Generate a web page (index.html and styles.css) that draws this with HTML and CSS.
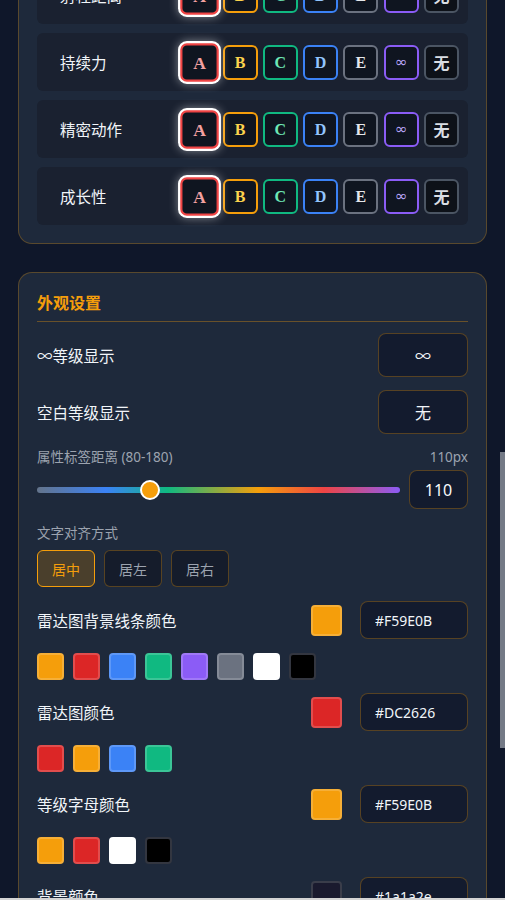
FILE: index.html
```html
<!DOCTYPE html>
<html lang="zh-CN">
<head>
<meta charset="utf-8">
<title>外观设置</title>
<link rel="stylesheet" href="styles.css">
</head>
<body>
<main class="page">
  <section class="panel panel-grades">
    <div class="grade-row">
      <span class="grade-label">射程距离</span>
      <div class="grade-group">
        <button class="grade g-a selected">A</button>
        <button class="grade g-b">B</button>
        <button class="grade g-c">C</button>
        <button class="grade g-d">D</button>
        <button class="grade g-e">E</button>
        <button class="grade g-inf">∞</button>
        <button class="grade g-none">无</button>
      </div>
    </div>
    <div class="grade-row">
      <span class="grade-label">持续力</span>
      <div class="grade-group">
        <button class="grade g-a selected">A</button>
        <button class="grade g-b">B</button>
        <button class="grade g-c">C</button>
        <button class="grade g-d">D</button>
        <button class="grade g-e">E</button>
        <button class="grade g-inf">∞</button>
        <button class="grade g-none">无</button>
      </div>
    </div>
    <div class="grade-row">
      <span class="grade-label">精密动作</span>
      <div class="grade-group">
        <button class="grade g-a selected">A</button>
        <button class="grade g-b">B</button>
        <button class="grade g-c">C</button>
        <button class="grade g-d">D</button>
        <button class="grade g-e">E</button>
        <button class="grade g-inf">∞</button>
        <button class="grade g-none">无</button>
      </div>
    </div>
    <div class="grade-row">
      <span class="grade-label">成长性</span>
      <div class="grade-group">
        <button class="grade g-a selected">A</button>
        <button class="grade g-b">B</button>
        <button class="grade g-c">C</button>
        <button class="grade g-d">D</button>
        <button class="grade g-e">E</button>
        <button class="grade g-inf">∞</button>
        <button class="grade g-none">无</button>
      </div>
    </div>
  </section>

  <section class="panel panel-look">
    <h2 class="panel-title">外观设置</h2>

    <div class="setting-row first">
      <span class="setting-label">∞等级显示</span>
      <div class="value-box">∞</div>
    </div>
    <div class="setting-row">
      <span class="setting-label">空白等级显示</span>
      <div class="value-box">无</div>
    </div>

    <div class="slider-block">
      <div class="slider-head">
        <span class="small-label">属性标签距离 (80-180)</span>
        <span class="small-label">110px</span>
      </div>
      <div class="slider-row">
        <input class="range" type="range" min="80" max="180" value="110">
        <input class="num-box" type="text" value="110">
      </div>
    </div>

    <div class="align-block">
      <div class="small-label">文字对齐方式</div>
      <div class="align-group">
        <button class="align-btn active">居中</button>
        <button class="align-btn">居左</button>
        <button class="align-btn">居右</button>
      </div>
    </div>

    <div class="color-block first-color">
      <div class="color-row">
        <span class="setting-label">雷达图背景线条颜色</span>
        <div class="color-pick">
          <span class="swatch c-amber"></span>
          <input class="hex-box" type="text" value="#F59E0B">
        </div>
      </div>
      <div class="presets">
        <span class="preset c-amber"></span>
        <span class="preset c-red"></span>
        <span class="preset c-blue"></span>
        <span class="preset c-green"></span>
        <span class="preset c-purple"></span>
        <span class="preset c-gray"></span>
        <span class="preset c-white"></span>
        <span class="preset c-black"></span>
      </div>
    </div>

    <div class="color-block">
      <div class="color-row">
        <span class="setting-label">雷达图颜色</span>
        <div class="color-pick">
          <span class="swatch c-red"></span>
          <input class="hex-box" type="text" value="#DC2626">
        </div>
      </div>
      <div class="presets">
        <span class="preset c-red"></span>
        <span class="preset c-amber"></span>
        <span class="preset c-blue"></span>
        <span class="preset c-green"></span>
      </div>
    </div>

    <div class="color-block">
      <div class="color-row">
        <span class="setting-label">等级字母颜色</span>
        <div class="color-pick">
          <span class="swatch c-amber"></span>
          <input class="hex-box" type="text" value="#F59E0B">
        </div>
      </div>
      <div class="presets">
        <span class="preset c-amber"></span>
        <span class="preset c-red"></span>
        <span class="preset c-white"></span>
        <span class="preset c-black"></span>
      </div>
    </div>

    <div class="color-block">
      <div class="color-row">
        <span class="setting-label">背景颜色</span>
        <div class="color-pick">
          <span class="swatch c-navy"></span>
          <input class="hex-box" type="text" value="#1a1a2e">
        </div>
      </div>
      <div class="presets">
        <span class="preset c-navy"></span>
        <span class="preset c-black"></span>
        <span class="preset c-white"></span>
      </div>
    </div>
  </section>
</main>
<div class="scroll-thumb"></div>
<div class="bottom-edge"></div>
</body>
</html>
```

FILE: styles.css
```css
html, body {
  margin: 0;
  padding: 0;
  height: 900px;
  overflow: hidden;
}

body {
  background: #0f172a;
  font-family: "Noto Sans", "Noto Sans CJK SC", sans-serif;
  color: #e5e7eb;
}

.page {
  padding: 0 18px;
}

.panel {
  background: #1e293b;
  border: 1px solid rgba(245, 158, 11, 0.28);
  border-radius: 14px;
  padding: 18px;
}

.panel-grades {
  margin-top: -53px;
  display: flex;
  flex-direction: column;
  gap: 9px;
}

.grade-row {
  height: 58px;
  display: flex;
  align-items: center;
  background: #1a2130;
  border-radius: 6px;
  padding: 0 9px 0 23px;
  box-sizing: border-box;
}

.grade-label {
  flex: 1;
  font-size: 15.5px;
  color: #f1f5f9;
}

.grade-group {
  display: flex;
  gap: 5.3px;
}

.grade {
  width: 35px;
  height: 35px;
  box-sizing: border-box;
  border: 2px solid #6b7280;
  border-radius: 6px;
  background: #0f1520;
  padding: 0;
  font-family: "Liberation Serif", "Noto Sans CJK SC", serif;
  font-weight: bold;
  font-size: 16px;
  line-height: 31px;
  text-align: center;
  color: #e5e7eb;
}

.g-a { border-color: #ef4444; color: #f3a1a1; }
.g-b { border-color: #f59e0b; color: #fcd34d; }
.g-c { border-color: #10b981; color: #6ee7b7; }
.g-d { border-color: #3b82f6; color: #93c5fd; }
.g-e { border-color: #6b7280; color: #e5e7eb; }
.g-inf { border-color: #8b5cf6; color: #b9a6f7; font-family: "DejaVu Sans", sans-serif; font-weight: normal; font-size: 15px; }
.g-none { border-color: #4b5563; color: #d9dde3; font-family: "Noto Sans CJK SC", sans-serif; font-size: 16px; background: #0d1118; }

.grade.selected {
  transform: scale(1.1);
  box-shadow: 0 0 0 2px #ffffff, 0 0 9px 2px rgba(255, 255, 255, 0.45);
}

.panel-look {
  margin-top: 28px;
  padding-bottom: 40px;
}

.panel-title {
  margin: 0;
  font-size: 16px;
  line-height: 24px;
  font-weight: bold;
  color: #f59e0b;
  padding-bottom: 6px;
  border-bottom: 1px solid rgba(245, 158, 11, 0.35);
}

.setting-row {
  display: flex;
  align-items: center;
  justify-content: space-between;
  margin-top: 13px;
}

.setting-row.first {
  margin-top: 11px;
}

.setting-label {
  font-size: 15.5px;
  color: #f1f5f9;
}

.value-box {
  width: 90px;
  height: 44px;
  box-sizing: border-box;
  border: 1px solid rgba(245, 158, 11, 0.3);
  border-radius: 8px;
  background: #131b2e;
  display: flex;
  align-items: center;
  justify-content: center;
  font-size: 16px;
  color: #f1f5f9;
}

.slider-block {
  margin-top: 14px;
}

.slider-head {
  display: flex;
  justify-content: space-between;
  margin-bottom: 4px;
}

.small-label {
  font-size: 13.5px;
  line-height: 18px;
  color: #9ca3af;
}

.slider-row {
  display: flex;
  align-items: center;
  gap: 9px;
}

.range {
  -webkit-appearance: none;
  appearance: none;
  flex: 1;
  margin: 0;
  height: 20px;
  background: transparent;
}

.range::-webkit-slider-runnable-track {
  height: 6px;
  border-radius: 3px;
  background: linear-gradient(90deg, #64748b 0%, #3b82f6 19%, #10b981 36%, #f59e0b 61%, #ef4444 79%, #8b5cf6 100%);
}

.range::-webkit-slider-thumb {
  -webkit-appearance: none;
  appearance: none;
  width: 20px;
  height: 20px;
  margin-top: -7px;
  border-radius: 50%;
  background: #f59e0b;
  border: 2px solid #ffffff;
  box-sizing: border-box;
}

.num-box {
  width: 59px;
  height: 39px;
  box-sizing: border-box;
  border: 1px solid rgba(245, 158, 11, 0.3);
  border-radius: 8px;
  background: #131b2e;
  color: #f8fafc;
  font-family: "Noto Sans", sans-serif;
  font-size: 16px;
  text-align: center;
  padding: 0;
  outline: none;
}

.align-block {
  margin-top: 15px;
}

.align-group {
  display: flex;
  gap: 9px;
  margin-top: 8px;
}

.align-btn {
  width: 58px;
  height: 37px;
  box-sizing: border-box;
  border: 1px solid rgba(245, 158, 11, 0.3);
  border-radius: 6px;
  background: #151c2b;
  color: #9ca3af;
  font-family: "Noto Sans CJK SC", sans-serif;
  font-size: 14px;
  padding: 0;
}

.align-btn.active {
  background: #4a3f2c;
  border-color: #f59e0b;
  color: #f59e0b;
}

.color-block {
  margin-bottom: 13px;
}

.color-block.first-color {
  margin-top: 14px;
}

.color-row {
  display: flex;
  align-items: center;
  justify-content: space-between;
}

.color-pick {
  display: flex;
  align-items: center;
  gap: 18px;
}

.swatch {
  width: 31px;
  height: 31px;
  box-sizing: border-box;
  border-radius: 4px;
  border: 2px solid rgba(255, 255, 255, 0.18);
}

.hex-box {
  width: 108px;
  height: 38px;
  box-sizing: border-box;
  border: 1px solid rgba(245, 158, 11, 0.3);
  border-radius: 8px;
  background: #131b2e;
  color: #f1f5f9;
  font-family: "Noto Sans", sans-serif;
  font-size: 14px;
  padding: 0 0 0 14px;
  outline: none;
}

.presets {
  display: flex;
  gap: 9px;
  margin-top: 14px;
}

.preset {
  width: 27px;
  height: 27px;
  box-sizing: border-box;
  border-radius: 4px;
  border: 2px solid rgba(255, 255, 255, 0.18);
}

.c-amber { background: #f59e0b; }
.c-red { background: #dc2626; }
.c-blue { background: #3b82f6; }
.c-green { background: #10b981; }
.c-purple { background: #8b5cf6; }
.c-gray { background: #6b7280; }
.c-white { background: #ffffff; }
.c-black { background: #000000; border-color: #333640; }
.c-navy { background: #1a1a2e; border-color: #3a3d4a; }

.scroll-thumb {
  position: fixed;
  right: 0;
  top: 452px;
  width: 5px;
  height: 296px;
  background: #747a86;
}

.bottom-edge {
  position: fixed;
  left: 0;
  right: 0;
  bottom: 0;
  height: 2px;
  background: #d4d4d4;
}
```
